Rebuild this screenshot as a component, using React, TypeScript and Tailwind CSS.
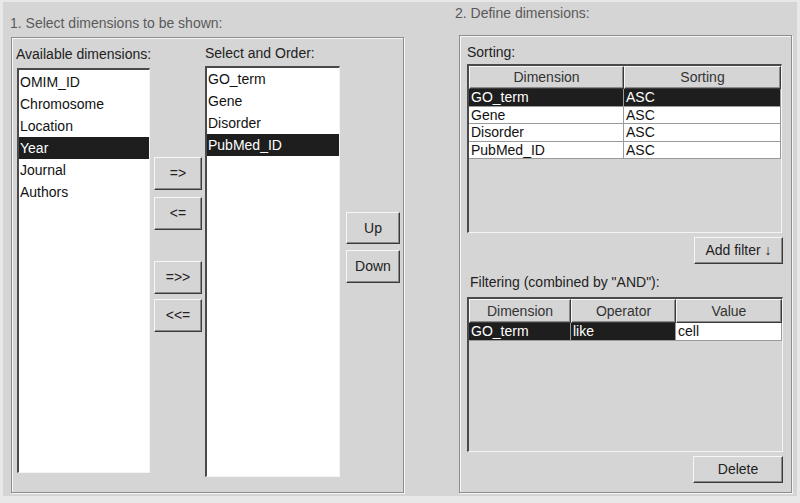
import React from 'react';

const font = "font-['Liberation_Sans',Arial,sans-serif]";
const raised =
  'bg-[#d5d5d5] border border-t-[#f6f6f6] border-l-[#f6f6f6] border-r-[#3a3a3a] border-b-[#3a3a3a] shadow-[inset_-1px_-1px_0_#8a8a8a]';
const sunken =
  'border-t-2 border-l-2 border-r border-b border-t-[#4a4a4a] border-l-[#4a4a4a] border-r-[#f4f4f4] border-b-[#f4f4f4]';
const etched = 'border border-[#8e8e8e] shadow-[inset_1px_1px_0_#f6f6f6,1px_1px_0_#f6f6f6]';

const Button = ({ label, className }: { label: string; className: string }) => (
  <button className={`${raised} ${className} flex items-center justify-center text-[14px] text-[#222] whitespace-nowrap`}>
    {label}
  </button>
);

const ListBox = ({
  items,
  selected,
  className,
}: {
  items: string[];
  selected: string;
  className: string;
}) => (
  <div className={`${sunken} bg-white ${className}`}>
    {items.map((it) => (
      <div
        key={it}
        className={`h-[22px] leading-[22px] pl-[1px] text-[14px] ${
          it === selected ? 'bg-[#1e1e1e] text-white' : 'text-[#111]'
        }`}
      >
        {it}
      </div>
    ))}
  </div>
);

const HeaderCell = ({ label, className }: { label: string; className: string }) => (
  <div className={`${raised} ${className} flex items-center justify-center text-[14px] text-[#333]`}>
    {label}
  </div>
);

const Cell = ({
  text,
  dark,
  className,
}: {
  text: string;
  dark: boolean;
  className: string;
}) => (
  <div
    className={`${className} h-full border-r border-b border-[#9a9a9a] pl-[2px] text-[14px] leading-[17px] ${
      dark ? 'bg-[#1e1e1e] text-white' : 'bg-white text-[#111]'
    }`}
  >
    {text}
  </div>
);

const sortRows = [
  { dim: 'GO_term', h: 'h-[18px]' },
  { dim: 'Gene', h: 'h-[17px]' },
  { dim: 'Disorder', h: 'h-[18px]' },
  { dim: 'PubMed_ID', h: 'h-[17px]' },
];

export default function App() {
  return (
    <div className={`w-[800px] h-[503px] bg-[#e8e8e8] pt-[2px] px-[3px] ${font}`}>
      <div className="h-[494px] bg-[#d5d5d5] flex">
        {/* left section */}
        <div className="ml-[8px] w-[393px] flex flex-col">
          <div className="mt-[13px] h-[17px] leading-[17px] text-[14px] text-[#5a5a5a] -ml-[1px] whitespace-nowrap">
            1. Select dimensions to be shown:
          </div>
          <div className={`${etched} mt-[5px] h-[456px] flex items-start`}>
            <div className="ml-[5px] w-[133px] flex flex-col">
              <div className="mt-[8px] h-[17px] leading-[17px] text-[14px] text-[#222] -ml-[1px] whitespace-nowrap">
                Available dimensions:
              </div>
              <ListBox
                className="mt-[5px] h-[405px] pt-[1px]"
                items={['OMIM_ID', 'Chromosome', 'Location', 'Year', 'Journal', 'Authors']}
                selected="Year"
              />
            </div>
            <div className="ml-[4px] w-[48px] mt-[119px] flex flex-col">
              <Button label="=>" className="h-[33px]" />
              <Button label="<=" className="h-[33px] mt-[7px]" />
              <Button label="=>>" className="h-[33px] mt-[31px]" />
              <Button label="<<=" className="h-[33px] mt-[5px]" />
            </div>
            <div className="ml-[3px] w-[135px] flex flex-col">
              <div className="mt-[7px] h-[17px] leading-[17px] text-[14px] text-[#222] whitespace-nowrap">
                Select and Order:
              </div>
              <ListBox
                className="mt-[4px] h-[411px]"
                items={['GO_term', 'Gene', 'Disorder', 'PubMed_ID']}
                selected="PubMed_ID"
              />
            </div>
            <div className="ml-[6px] w-[54px] mt-[174px] flex flex-col">
              <Button label="Up" className="h-[32px]" />
              <Button label="Down" className="h-[33px] mt-[6px]" />
            </div>
          </div>
        </div>

        {/* right section */}
        <div className="ml-[55px] w-[333px] flex flex-col">
          <div className="mt-[3px] h-[17px] leading-[17px] text-[14px] text-[#5a5a5a] -ml-[4px] whitespace-nowrap">
            2. Define dimensions:
          </div>
          <div className={`${etched} mt-[13px] h-[458px] flex flex-col`}>
            <div className="ml-[7px] mt-[8px] h-[16px] leading-[16px] text-[14px] text-[#222]">Sorting:</div>
            <div className={`${sunken} ml-[7px] mt-[4px] w-[315px] h-[169px] bg-[#d5d5d5]`}>
              <div className="flex h-[23px]">
                <HeaderCell label="Dimension" className="w-[155px]" />
                <HeaderCell label="Sorting" className="flex-1" />
              </div>
              {sortRows.map((r, i) => (
                <div key={r.dim} className={`flex ${r.h}`}>
                  <Cell text={r.dim} dark={i === 0} className="w-[155px]" />
                  <Cell text="ASC" dark={i === 0} className="flex-1" />
                </div>
              ))}
            </div>
            <Button label="Add filter ↓" className="ml-[234px] mt-[4px] w-[89px] h-[27px]" />
            <div className="ml-[10px] mt-[10px] h-[16px] leading-[16px] text-[14px] text-[#222] whitespace-nowrap">
              Filtering (combined by "AND"):
            </div>
            <div className={`${sunken} ml-[7px] mt-[7px] w-[316px] h-[155px] bg-[#d5d5d5]`}>
              <div className="flex h-[24px]">
                <HeaderCell label="Dimension" className="w-[102px]" />
                <HeaderCell label="Operator" className="w-[105px]" />
                <HeaderCell label="Value" className="flex-1" />
              </div>
              <div className="flex h-[18px]">
                <Cell text="GO_term" dark className="w-[102px]" />
                <Cell text="like" dark className="w-[105px]" />
                <Cell text="cell" dark={false} className="flex-1" />
              </div>
            </div>
            <Button label="Delete" className="ml-[233px] mt-[4px] w-[90px] h-[27px]" />
          </div>
        </div>
      </div>
    </div>
  );
}
